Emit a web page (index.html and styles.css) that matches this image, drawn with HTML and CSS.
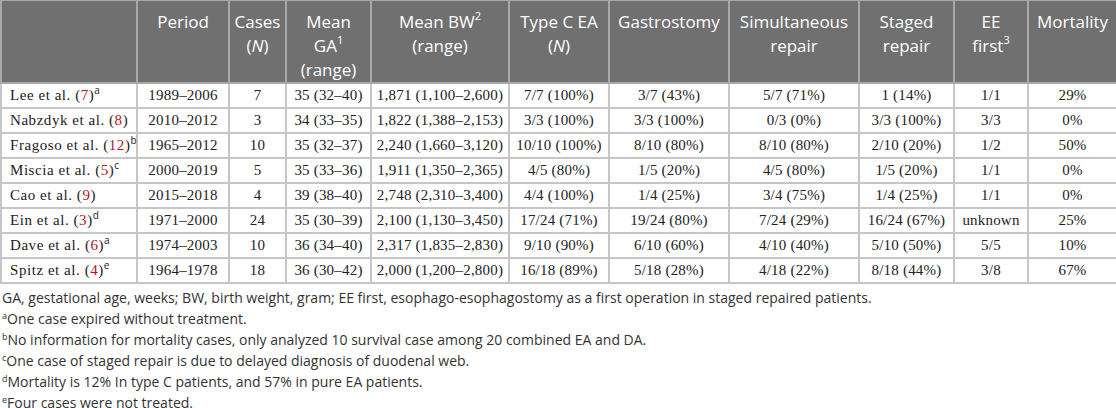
FILE: index.html
```html
<!DOCTYPE html>
<html>
<head>
<meta charset="utf-8">
<link rel="stylesheet" href="styles.css">
</head>
<body>
<table class="tbl">
<colgroup>
<col class="c1"><col class="c2"><col class="c3"><col class="c4"><col class="c5"><col class="c6"><col class="c7"><col class="c8"><col class="c9"><col class="c10"><col class="c11">
</colgroup>
<thead>
<tr>
<th></th>
<th>Period</th>
<th>Cases<br>(<i>N</i>)</th>
<th>Mean<br>GA<sup>1</sup><br>(range)</th>
<th>Mean BW<sup>2</sup><br>(range)</th>
<th>Type C EA<br>(<i>N</i>)</th>
<th>Gastrostomy</th>
<th>Simultaneous<br>repair</th>
<th>Staged<br>repair</th>
<th>EE<br>first<sup>3</sup></th>
<th>Mortality</th>
</tr>
</thead>
<tbody>
<tr><td class="name">Lee et al. (<span class="ref">7</span>)<sup>a</sup></td><td>1989–2006</td><td>7</td><td>35 (32–40)</td><td>1,871 (1,100–2,600)</td><td>7/7 (100%)</td><td>3/7 (43%)</td><td>5/7 (71%)</td><td>1 (14%)</td><td>1/1</td><td>29%</td></tr>
<tr><td class="name">Nabzdyk et al. (<span class="ref">8</span>)</td><td>2010–2012</td><td>3</td><td>34 (33–35)</td><td>1,822 (1,388–2,153)</td><td>3/3 (100%)</td><td>3/3 (100%)</td><td>0/3 (0%)</td><td>3/3 (100%)</td><td>3/3</td><td>0%</td></tr>
<tr><td class="name">Fragoso et al. (<span class="ref">12</span>)<sup>b</sup></td><td>1965–2012</td><td>10</td><td>35 (32–37)</td><td>2,240 (1,660–3,120)</td><td>10/10 (100%)</td><td>8/10 (80%)</td><td>8/10 (80%)</td><td>2/10 (20%)</td><td>1/2</td><td>50%</td></tr>
<tr><td class="name">Miscia et al. (<span class="ref">5</span>)<sup>c</sup></td><td>2000–2019</td><td>5</td><td>35 (33–36)</td><td>1,911 (1,350–2,365)</td><td>4/5 (80%)</td><td>1/5 (20%)</td><td>4/5 (80%)</td><td>1/5 (20%)</td><td>1/1</td><td>0%</td></tr>
<tr><td class="name">Cao et al. (<span class="ref">9</span>)</td><td>2015–2018</td><td>4</td><td>39 (38–40)</td><td>2,748 (2,310–3,400)</td><td>4/4 (100%)</td><td>1/4 (25%)</td><td>3/4 (75%)</td><td>1/4 (25%)</td><td>1/1</td><td>0%</td></tr>
<tr><td class="name">Ein et al. (<span class="ref">3</span>)<sup>d</sup></td><td>1971–2000</td><td>24</td><td>35 (30–39)</td><td>2,100 (1,130–3,450)</td><td>17/24 (71%)</td><td>19/24 (80%)</td><td>7/24 (29%)</td><td>16/24 (67%)</td><td>unknown</td><td>25%</td></tr>
<tr><td class="name">Dave et al. (<span class="ref">6</span>)<sup>a</sup></td><td>1974–2003</td><td>10</td><td>36 (34–40)</td><td>2,317 (1,835–2,830)</td><td>9/10 (90%)</td><td>6/10 (60%)</td><td>4/10 (40%)</td><td>5/10 (50%)</td><td>5/5</td><td>10%</td></tr>
<tr><td class="name">Spitz et al. (<span class="ref">4</span>)<sup>e</sup></td><td>1964–1978</td><td>18</td><td>36 (30–42)</td><td>2,000 (1,200–2,800)</td><td>16/18 (89%)</td><td>5/18 (28%)</td><td>4/18 (22%)</td><td>8/18 (44%)</td><td>3/8</td><td>67%</td></tr>
</tbody>
</table>
<div class="notes">
<p>GA, gestational age, weeks; BW, birth weight, gram; EE first, esophago-esophagostomy as a first operation in staged repaired patients.</p>
<p><sup>a</sup>One case expired without treatment.</p>
<p><sup>b</sup>No information for mortality cases, only analyzed 10 survival case among 20 combined EA and DA.</p>
<p><sup>c</sup>One case of staged repair is due to delayed diagnosis of duodenal web.</p>
<p><sup>d</sup>Mortality is 12% In type C patients, and 57% in pure EA patients.</p>
<p><sup>e</sup>Four cases were not treated.</p>
</div>
</body>
</html>
```
FILE: styles.css
```css
html, body {
  margin: 0;
  padding: 0;
  background: #ffffff;
}
body {
  width: 1116px;
  height: 408px;
  overflow: hidden;
}
.tbl {
  table-layout: fixed;
  border-collapse: collapse;
  width: 1116px;
  margin: 0;
}
.c1 { width: 136px; }
.c2 { width: 92px; }
.c3 { width: 57px; }
.c4 { width: 85px; }
.c5 { width: 138px; }
.c6 { width: 100px; }
.c7 { width: 120px; }
.c8 { width: 130px; }
.c9 { width: 95px; }
.c10 { width: 74px; }
.c11 { width: 89px; }
.tbl th {
  background: #707070;
  color: #ffffff;
  font-family: "Open Sans", sans-serif;
  font-weight: normal;
  font-size: 17px;
  line-height: 24px;
  height: 81px;
  padding: 9px 0 0;
  box-sizing: border-box;
  vertical-align: top;
  text-align: center;
  border: 2px solid #a9a9a9;
  border-top: 1px solid #a9a9a9;
  white-space: nowrap;
}
.tbl th sup {
  font-size: 11px;
  line-height: 0;
  vertical-align: 8px;
}
.tbl td {
  font-family: "Liberation Serif", serif;
  font-size: 15px;
  letter-spacing: 0.2px;
  color: #222222;
  height: 25px;
  padding: 0 2px;
  box-sizing: border-box;
  text-align: center;
  vertical-align: middle;
  border: 2px solid #c6c6c6;
  white-space: nowrap;
}
.tbl td.name {
  text-align: left;
  padding-left: 8px;
  letter-spacing: 0.55px;
}
.ref {
  color: #b0182a;
}
.tbl td sup {
  font-family: "Open Sans", sans-serif;
  font-size: 10px;
  letter-spacing: 0;
  line-height: 0;
  vertical-align: 6px;
}
.notes {
  font-family: "Open Sans", sans-serif;
  font-size: 14px;
  color: #333333;
  padding: 3px 0 0 2px;
}
.notes p {
  margin: 0;
  line-height: 21px;
  white-space: nowrap;
}
.notes sup {
  font-size: 9px;
  line-height: 0;
  vertical-align: 5px;
}
```
